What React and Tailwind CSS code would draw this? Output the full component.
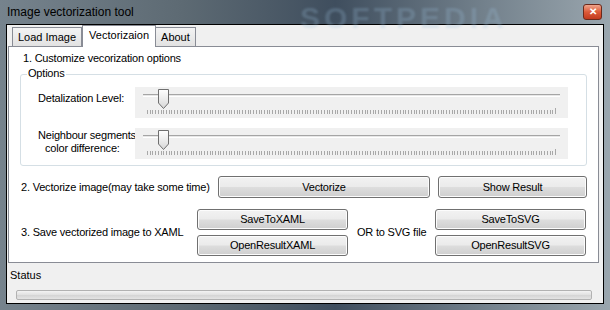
import React from 'react';

const font = { fontFamily: '"Liberation Sans", Arial, sans-serif' };

const Button = ({ label, className = '' }) => (
  <button
    className={`flex items-center justify-center rounded-[3px] border border-[#707070] bg-[linear-gradient(#f2f2f2_0%,#ebebeb_48%,#dddddd_52%,#cfcfcf_100%)] text-[11px] font-normal text-black shadow-[inset_0_0_0_1px_#fcfcfc] ${className}`}
  >
    {label}
  </button>
);

const Ticks = () => {
  const ticks = [];
  for (let i = 0; i <= 150; i++) {
    ticks.push(Math.round(4 + (i * 408) / 150));
  }
  return (
    <svg width="420" height="8" className="block">
      {ticks.map((x, i) => (
        <line
          key={i}
          x1={x + 0.5}
          x2={x + 0.5}
          y1={i === 150 ? 1 : 3}
          y2="7"
          stroke="#a8a8a8"
          strokeWidth="1"
        />
      ))}
    </svg>
  );
};

const Slider = () => (
  <div className="relative h-[31px] w-[433px] bg-[#f0f0f0]">
    <div className="absolute left-[8px] top-[7px] h-[3px] w-[417px] border-t border-[#a5a5a5] border-b border-b-white bg-[#e7e7e7]" />
    <svg width="11" height="20" className="absolute left-[23px] top-[2px]">
      <defs>
        <linearGradient id="thumb" x1="0" y1="0" x2="0" y2="1">
          <stop offset="0" stopColor="#ffffff" />
          <stop offset="0.5" stopColor="#ececec" />
          <stop offset="1" stopColor="#d6d6d6" />
        </linearGradient>
      </defs>
      <path d="M0.5 0.5 H10.5 V14 L5.5 19.5 L0.5 14 Z" fill="url(#thumb)" stroke="#6f6f6f" />
    </svg>
    <div className="absolute left-[8px] top-[20px]">
      <Ticks />
    </div>
  </div>
);

export default function App() {
  return (
    <div
      className="relative flex h-[310px] w-[610px] flex-col overflow-hidden bg-[linear-gradient(to_right,#76838d,#5d6a73_30%,#3f4e5e_55%,#74828d_80%,#9aa6ae)]"
      style={font}
    >
      {/* title bar */}
      <div className="relative flex h-[24px] items-center pl-[7px]">
        <span className="relative z-10 text-[12px] text-black">Image vectorization tool</span>
        <span className="absolute left-[300px] top-[-5px] text-[30px] font-bold tracking-[4px] text-[#9cc0dd]/25 blur-[1px]">
          SOFTPEDIA
        </span>
        <div className="absolute right-[8px] top-[4px] flex h-[16px] w-[19px] items-center justify-center rounded-[3px] border border-[#6b2a1c] bg-[linear-gradient(#f0a58c,#dc5a38_50%,#c23a1e)]">
          <span className="text-[10px] font-bold leading-none text-white">✕</span>
        </div>
      </div>

      {/* client area */}
      <div className="mx-[6px] mb-[6px] flex flex-1 flex-col border border-black bg-[#f0f0f0]">
        {/* tabs */}
        <div className="flex h-[21px] items-end pl-[5px] text-[11px]">
          <div className="flex h-[19px] items-center border border-b-0 border-[#898c95] bg-[linear-gradient(#f3f3f3,#e2e2e2)] px-[5px]">
            Load Image
          </div>
          <div className="relative z-10 mb-[-1px] flex h-[22px] items-center border border-b-0 border-[#898c95] bg-white px-[6px] pb-[2px]">
            Vectorizaion
          </div>
          <div className="flex h-[19px] items-center border border-b-0 border-l-0 border-[#898c95] bg-[linear-gradient(#f3f3f3,#e2e2e2)] px-[5px]">
            About
          </div>
        </div>

        {/* tab panel */}
        <div className="ml-[1px] mr-[4px] flex h-[217px] flex-col border border-[#898c95] bg-white text-[11px] tracking-[-0.2px] text-black">
          <div className="pl-[14px] pt-[5px] leading-[13px]">1. Customize vecorization options</div>

          <div className="relative mx-[11px] mt-[9px] h-[92px] rounded-[3px] border border-[#d5dfe5]">
            <span className="absolute left-[6px] top-[-8px] bg-white px-[1px] leading-[13px]">Options</span>
            <div className="flex pl-[17px] pt-[12px]">
              <div className="w-[97px] whitespace-nowrap pt-[5px] leading-[13px]">Detalization Level:</div>
              <Slider />
            </div>
            <div className="flex pl-[17px] pt-[10px]">
              <div className="w-[97px] whitespace-nowrap pt-[1px] leading-[13px]">
                Neighbour segments
                <br />
                <span className="pl-[7px]">color difference:</span>
              </div>
              <Slider />
            </div>
          </div>

          <div className="mt-[10px] flex items-center pl-[12px]">
            <div className="w-[197px] whitespace-nowrap">2. Vectorize image(may take some time)</div>
            <Button label="Vectorize" className="h-[22px] w-[212px]" />
            <Button label="Show Result" className="ml-[8px] h-[22px] w-[149px]" />
          </div>

          <div className="mt-[11px] flex items-center pl-[12px]">
            <div className="w-[176px] whitespace-nowrap">3. Save vectorized image to XAML</div>
            <div className="flex flex-col gap-[5px]">
              <Button label="SaveToXAML" className="h-[21px] w-[151px]" />
              <Button label="OpenResultXAML" className="h-[21px] w-[151px]" />
            </div>
            <div className="w-[87px] whitespace-nowrap pl-[9px]">OR to SVG file</div>
            <div className="flex flex-col gap-[5px]">
              <Button label="SaveToSVG" className="h-[21px] w-[151px]" />
              <Button label="OpenResultSVG" className="h-[21px] w-[151px]" />
            </div>
          </div>
        </div>

        {/* status */}
        <div className="pl-[3px] pt-[6px] text-[11px] leading-[13px]">Status</div>
        <div className="ml-[9px] mr-[11px] mt-[8px] h-[10px] rounded-[2px] border border-[#b2b2b2] bg-[linear-gradient(#f3f3f3,#e0e0e0_50%,#d4d4d4_51%,#e4e4e4)]" />
      </div>
    </div>
  );
}
